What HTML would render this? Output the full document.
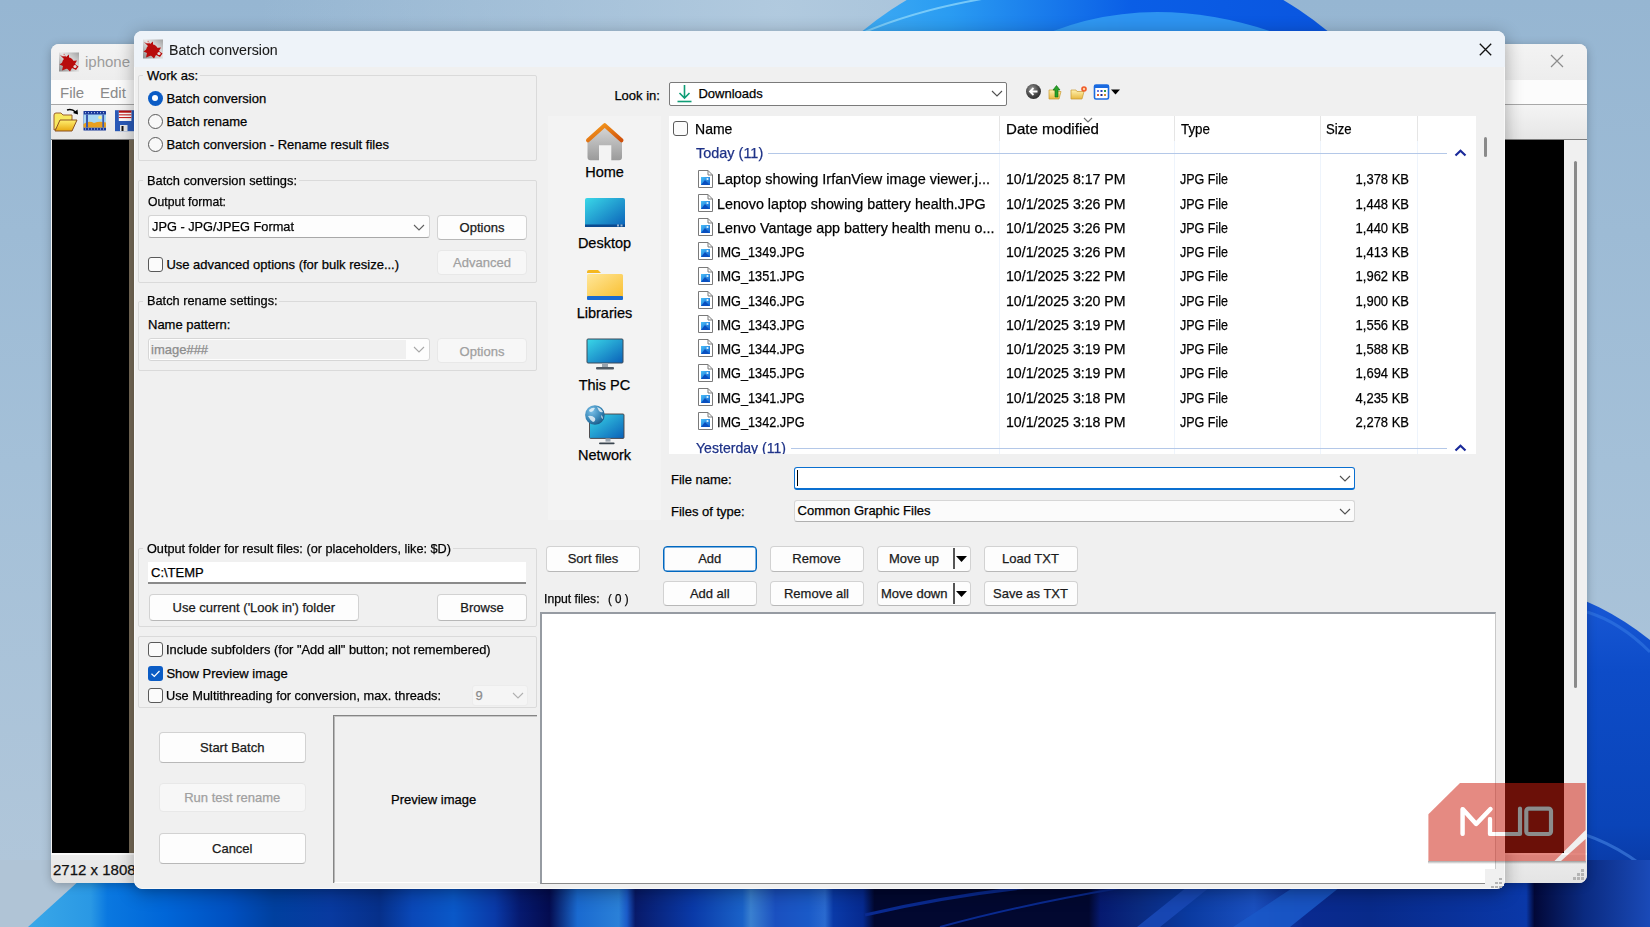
<!DOCTYPE html>
<html><head><meta charset="utf-8"><title>Batch conversion</title>
<style>
html,body{margin:0;padding:0;width:1650px;height:927px;overflow:hidden;background:#a3bfd7}
body{position:relative;font-family:"Liberation Sans",sans-serif;color:#000}
.a{position:absolute;box-sizing:border-box}
.t{position:absolute;white-space:nowrap;line-height:1;transform-origin:0 0;-webkit-text-stroke:0.25px currentColor}
</style></head><body>
<svg class="a" style="left:0;top:0" width="1650" height="927" viewBox="0 0 1650 927">
<defs>
<linearGradient id="wbg" x1="0" y1="0" x2="0" y2="1">
<stop offset="0" stop-color="#96b6d2"/><stop offset="0.5" stop-color="#a4c0d8"/><stop offset="1" stop-color="#b2c7da"/></linearGradient>
<linearGradient id="topb" x1="0" y1="0" x2="1" y2="0">
<stop offset="0" stop-color="#5cc0f4"/><stop offset="0.3" stop-color="#2a9cf2"/><stop offset="0.55" stop-color="#0a5ee6"/><stop offset="0.8" stop-color="#0a56e0"/><stop offset="1" stop-color="#2a78e8"/></linearGradient>
<linearGradient id="botb" x1="0" y1="0" x2="1" y2="0"><stop offset="0" stop-color="#b0c4d6"/><stop offset="0.016" stop-color="#b0c4d6"/><stop offset="0.017" stop-color="#3aa8e8"/><stop offset="0.055" stop-color="#2a98e4"/><stop offset="0.065" stop-color="#0a78e0"/><stop offset="0.1" stop-color="#0066d8"/><stop offset="0.14" stop-color="#0050c0"/><stop offset="0.166" stop-color="#00409f"/><stop offset="0.2" stop-color="#083aa0"/><stop offset="0.23" stop-color="#06308a"/><stop offset="0.25" stop-color="#0a48b8"/><stop offset="0.275" stop-color="#0a58c8"/><stop offset="0.3" stop-color="#0a3aa8"/><stop offset="0.315" stop-color="#061a70"/><stop offset="0.333" stop-color="#040c50"/><stop offset="0.35" stop-color="#1a6ad0"/><stop offset="0.375" stop-color="#2a80d8"/><stop offset="0.38" stop-color="#1a5ac8"/><stop offset="0.385" stop-color="#081a6a"/><stop offset="0.42" stop-color="#0a3aa8"/><stop offset="0.45" stop-color="#1a62c8"/><stop offset="0.455" stop-color="#3a80d0"/><stop offset="0.47" stop-color="#1a50c0"/><stop offset="0.49" stop-color="#1a5ac8"/><stop offset="0.5" stop-color="#2a6ad0"/><stop offset="0.505" stop-color="#0a3aa8"/><stop offset="0.523" stop-color="#062a90"/><stop offset="0.53" stop-color="#020830"/><stop offset="0.66" stop-color="#020830"/><stop offset="0.667" stop-color="#061a70"/><stop offset="0.69" stop-color="#0a2a80"/><stop offset="0.72" stop-color="#0a3aa0"/><stop offset="0.76" stop-color="#1a50c0"/><stop offset="0.79" stop-color="#0a2a90"/><stop offset="0.83" stop-color="#082a8a"/><stop offset="0.925" stop-color="#0a38a8"/><stop offset="0.93" stop-color="#020838"/><stop offset="0.96" stop-color="#0a2a80"/><stop offset="1" stop-color="#1a4ab8"/></linearGradient>
<linearGradient id="rb" x1="0" y1="0" x2="0" y2="1">
<stop offset="0" stop-color="#1a5ad8"/><stop offset="0.25" stop-color="#0d4cc8"/><stop offset="0.7" stop-color="#0a44b8"/><stop offset="1" stop-color="#082e90"/></linearGradient>
</defs>
<radialGradient id="lt" cx="780" cy="10" r="520" gradientUnits="userSpaceOnUse"><stop offset="0" stop-color="#b4cce0" stop-opacity="0.9"/><stop offset="1" stop-color="#b4cce0" stop-opacity="0"/></radialGradient>
<rect width="1650" height="927" fill="url(#wbg)"/>
<rect width="1650" height="927" fill="url(#lt)"/>
<circle cx="1095" cy="315" r="367" fill="url(#topb)"/>
<path d="M1020 46 Q1150 -22 1310 46 Z" fill="#3aa6f4" opacity="0.75"/>
<path d="M860 34 Q920 8 1000 -4" stroke="#8ad4fa" stroke-width="2" fill="none" opacity="0.8"/>
<path d="M1540 586 Q1600 600 1650 640 L1650 927 L1540 927 Z" fill="url(#rb)"/>
<path d="M1587 612 Q1620 622 1650 652" stroke="#3a80e8" stroke-width="3" fill="none" opacity="0.5"/>
<path d="M1540 850 Q1610 860 1650 900 L1650 927 L1540 927 Z" fill="#0a2a80"/>
<path d="M1560 828 Q1610 838 1650 872" stroke="#4a8ae8" stroke-width="3" fill="none" opacity="0.55"/>
<rect x="0" y="860" width="1650" height="67" fill="url(#botb)"/>
<path d="M0 860 L102 860 L28 927 L0 927 Z" fill="#b0c4d6"/>
<path d="M1137 927 L1160 927 L1215 883 L1192 883 Z" fill="#1a4ab8" opacity="0.85"/>
<path d="M1233 927 L1290 927 L1345 883 L1300 883 Z" fill="#1a58c8" opacity="0.9"/>
<path d="M865 915 Q950 895 1040 886" stroke="#0a2a90" stroke-width="3" fill="none"/>
<path d="M940 927 Q1020 905 1120 888" stroke="#0a2a90" stroke-width="2" fill="none"/>
</svg>
<div class="a" style="left:51px;top:44px;width:1536px;height:839px;background:#f0f0f0;border-radius:8px;box-shadow:0 2px 10px rgba(0,0,0,0.25);overflow:hidden"></div>
<div class="a" style="left:51px;top:44px;width:1536px;height:36px;background:linear-gradient(#f3f3f3,#ededed);border-radius:8px 8px 0 0"></div>
<div class="t" style="left:85px;top:53.60px;font-size:15px;color:#9c9c9c;-webkit-text-stroke:0">iphone</div>
<div class="a" style="left:51px;top:80px;width:1536px;height:24px;background:#fcfcfc"></div>
<div class="a" style="left:51px;top:104px;width:1536px;height:1px;background:#a8a8a8"></div>
<div class="t" style="left:60px;top:84.50px;font-size:15px;color:#8a8a8a;-webkit-text-stroke:0">File</div>
<div class="t" style="left:100px;top:84.50px;font-size:15px;color:#8a8a8a;-webkit-text-stroke:0">Edit</div>
<div class="a" style="left:51px;top:105px;width:1536px;height:34px;background:linear-gradient(#f4f4f4,#e6e6e6)"></div>
<div class="a" style="left:51px;top:139px;width:1536px;height:1px;background:#7e7e7e"></div>
<div class="a" style="left:52px;top:140px;width:1512px;height:713px;background:#000"></div>
<div class="a" style="left:129px;top:140px;width:5px;height:713px;background:#776b58"></div>
<div class="a" style="left:1564px;top:140px;width:23px;height:713px;background:#f0f0f0"></div>
<div class="a" style="left:1574px;top:161px;width:3px;height:527px;background:#8a8a8a;border-radius:2px"></div>
<div class="a" style="left:51px;top:853px;width:1536px;height:2px;background:#fafafa"></div>
<div class="a" style="left:51px;top:855px;width:1536px;height:28px;background:linear-gradient(#ececec,#e4e4e4);border-radius:0 0 8px 8px"></div>
<div class="t" style="left:53px;top:862.30px;font-size:15px;color:#111;">2712 x 1808</div>
<svg class="a" style="left:1550px;top:54px" width="14" height="14"><path d="M1 1L13 13M13 1L1 13" stroke="#8c8c8c" stroke-width="1.2"/></svg>
<svg class="a" style="left:59px;top:52px" width="20" height="20" viewBox="0 0 20 20">
<defs><linearGradient id="ig59" x1="1" y1="0" x2="0" y2="1"><stop offset="0" stop-color="#a0a0a0"/><stop offset="0.45" stop-color="#e6e6e6"/><stop offset="1" stop-color="#8a8a8a"/></linearGradient></defs>
<rect x="0" y="0.5" width="20" height="19" fill="url(#ig59)"/>
<circle cx="9" cy="11" r="5.8" fill="#b80c0c"/>
<path d="M1 3L4 4.5L5 1.5L7 5L10 2.5L10 6L6 8Z" fill="#b80c0c"/>
<path d="M13 9L18 8.5L16 12L19.5 14.5L17 18L13 16L11 19.5L8 16.5L3 18.5L4 14L0.5 12.5L4 10Z" fill="#b80c0c"/>
<circle cx="16" cy="14.5" r="1.6" fill="#e0e0e0"/>
<circle cx="5" cy="3.5" r="0.9" fill="#f0f0f0"/>
</svg>
<svg class="a" style="left:52px;top:108px" width="84" height="26" viewBox="0 0 84 26">
<defs><linearGradient id="tfy" x1="0" y1="0" x2="0" y2="1"><stop offset="0" stop-color="#fff070"/><stop offset="1" stop-color="#e8a810"/></linearGradient></defs>
<path d="M2 7Q2 5 4 5L9 5L11 7L20 7L20 12L2 22Z" fill="#f8e860" stroke="#9a6030" stroke-width="1"/>
<path d="M8 12L25 12L20 23L3 23Z" fill="url(#tfy)" stroke="#8a5020" stroke-width="1"/>
<path d="M15 2Q20 0.5 23.5 4" stroke="#000" stroke-width="1.6" fill="none"/><path d="M21 5L25.5 1.5L26 6.5Z" fill="#000"/>
<rect x="31.5" y="3" width="22.5" height="19.5" rx="0.5" fill="#1a3a9a"/>
<rect x="31.5" y="6.5" width="22.5" height="13" fill="#a8d8f4"/>
<path d="M31.5 16Q37 12 42 15Q47 13 54 14.5L54 19.5L31.5 19.5Z" fill="#e8a020"/>
<circle cx="48" cy="9.5" r="1.8" fill="#f8f090"/>
<rect x="34" y="6.5" width="2" height="13" fill="#3a5ab0"/><rect x="50.3" y="6.5" width="1.8" height="13" fill="#3a5ab0"/>
<g fill="#c8d8f8"><rect x="33" y="4.2" width="1" height="1"/><rect x="36" y="4.2" width="1" height="1"/><rect x="39" y="4.2" width="1" height="1"/><rect x="42" y="4.2" width="1" height="1"/><rect x="45" y="4.2" width="1" height="1"/><rect x="48" y="4.2" width="1" height="1"/><rect x="51" y="4.2" width="1" height="1"/>
<rect x="33" y="20.5" width="1" height="1"/><rect x="36" y="20.5" width="1" height="1"/><rect x="39" y="20.5" width="1" height="1"/><rect x="42" y="20.5" width="1" height="1"/><rect x="45" y="20.5" width="1" height="1"/><rect x="48" y="20.5" width="1" height="1"/><rect x="51" y="20.5" width="1" height="1"/></g>
<rect x="63" y="2.2" width="21" height="21" fill="#2a5ab8"/>
<rect x="66.8" y="2.5" width="12.6" height="10.5" fill="#fff"/>
<rect x="66.8" y="2.5" width="12.6" height="2.2" fill="#b81010"/><rect x="66.8" y="6.3" width="12.6" height="1.1" fill="#c82020"/><rect x="66.8" y="9" width="12.6" height="1.1" fill="#c82020"/>
<rect x="68" y="17" width="7.5" height="6" fill="#e8e8e8"/><rect x="69.5" y="18" width="2" height="5" fill="#111"/>
</svg>
<div class="a" style="left:134px;top:31px;width:1371px;height:858px;background:#f0f0f0;border-radius:8px;box-shadow:0 4px 18px rgba(0,0,0,0.32);border:1px solid #f8f8f8;overflow:hidden"></div>
<div class="a" style="left:134px;top:31px;width:1371px;height:36px;background:#eef3f9;border-radius:8px 8px 0 0"></div>
<svg class="a" style="left:143px;top:39px" width="20" height="20" viewBox="0 0 20 20">
<defs><linearGradient id="ig143" x1="1" y1="0" x2="0" y2="1"><stop offset="0" stop-color="#a0a0a0"/><stop offset="0.45" stop-color="#e6e6e6"/><stop offset="1" stop-color="#8a8a8a"/></linearGradient></defs>
<rect x="0" y="0.5" width="20" height="19" fill="url(#ig143)"/>
<circle cx="9" cy="11" r="5.8" fill="#b80c0c"/>
<path d="M1 3L4 4.5L5 1.5L7 5L10 2.5L10 6L6 8Z" fill="#b80c0c"/>
<path d="M13 9L18 8.5L16 12L19.5 14.5L17 18L13 16L11 19.5L8 16.5L3 18.5L4 14L0.5 12.5L4 10Z" fill="#b80c0c"/>
<circle cx="16" cy="14.5" r="1.6" fill="#e0e0e0"/>
<circle cx="5" cy="3.5" r="0.9" fill="#f0f0f0"/>
</svg>
<div class="t" style="left:168.5px;top:42.85px;font-size:14px;color:#1a1a1a;transform:scaleX(1.0122);-webkit-text-stroke:0.1px #1a1a1a">Batch conversion</div>
<svg class="a" style="left:1478.5px;top:42.5px" width="13" height="13"><path d="M0.8 0.8L12.2 12.2M12.2 0.8L0.8 12.2" stroke="#111" stroke-width="1.3"/></svg>
<div class="a" style="left:138px;top:75px;width:399px;height:86px;border:1px solid #dadada;border-radius:2px"></div><div class="a" style="left:143px;top:72px;width:57px;height:6px;background:#f0f0f0"></div>
<div class="t" style="left:147px;top:69.00px;font-size:13px;color:#000;">Work as:</div>
<div class="a" style="left:147.8px;top:90.9px;width:15.0px;height:15.0px;background:#0b5cc5;border-radius:50%"></div><div class="a" style="left:152.3px;top:95.4px;width:6.0px;height:6.0px;background:#fff;border-radius:50%"></div>
<div class="t" style="left:166.4px;top:92.00px;font-size:13px;color:#000;">Batch conversion</div>
<div class="a" style="left:147.8px;top:114.1px;width:15.0px;height:15.0px;background:#f8f8f8;border:1px solid #5a5a5a;border-radius:50%"></div>
<div class="t" style="left:166.4px;top:115.20px;font-size:13px;color:#000;">Batch rename</div>
<div class="a" style="left:147.8px;top:137.2px;width:15.0px;height:15.0px;background:#f8f8f8;border:1px solid #5a5a5a;border-radius:50%"></div>
<div class="t" style="left:166.4px;top:138.30px;font-size:13px;color:#000;">Batch conversion - Rename result files</div>
<div class="a" style="left:138px;top:180px;width:399px;height:103px;border:1px solid #dadada;border-radius:2px"></div><div class="a" style="left:143px;top:177px;width:156px;height:6px;background:#f0f0f0"></div>
<div class="t" style="left:147px;top:174.00px;font-size:13px;color:#000;transform:scaleX(0.9885);">Batch conversion settings:</div>
<div class="t" style="left:148px;top:195.00px;font-size:13px;color:#000;transform:scaleX(0.9387);">Output format:</div>
<div class="a" style="left:148px;top:215px;width:282px;height:23px;background:#fdfdfd;border:1px solid #d4d4d4;border-bottom-color:#a8a8a8;border-radius:3px"></div>
<div class="t" style="left:152px;top:220.40px;font-size:13px;color:#000;transform:scaleX(0.9829);">JPG - JPG/JPEG Format</div>
<svg class="a" style="left:413.0px;top:223.5px" width="12" height="7"><path d="M1 1L6.0 6L11 1" stroke="#606060" stroke-width="1.1" fill="none"/></svg>
<div class="a" style="left:437px;top:215px;width:90px;height:25px;background:#fdfdfd;border:1px solid #d2d2d2;border-bottom-color:#b8b8b8;border-radius:4px"></div><div class="t" style="left:437px;width:90px;text-align:center;top:221.40px;font-size:13px;color:#1a1a1a;">Options</div>
<div class="a" style="left:148px;top:256.5px;width:15px;height:15.0px;background:#fbfbfb;border:1px solid #5a5a5a;border-radius:3px"></div>
<div class="t" style="left:166.4px;top:258.00px;font-size:13px;color:#000;">Use advanced options (for bulk resize...)</div>
<div class="a" style="left:437px;top:250px;width:90px;height:25px;background:#f7f7f7;border:1px solid #e8e8e8;border-radius:4px"></div><div class="t" style="left:437px;width:90px;text-align:center;top:256.00px;font-size:13px;color:#a0a0a0;">Advanced</div>
<div class="a" style="left:138px;top:301px;width:399px;height:70px;border:1px solid #dadada;border-radius:2px"></div><div class="a" style="left:143px;top:298px;width:136px;height:6px;background:#f0f0f0"></div>
<div class="t" style="left:147px;top:294.40px;font-size:13px;color:#000;transform:scaleX(0.9823);">Batch rename settings:</div>
<div class="t" style="left:148px;top:317.60px;font-size:13px;color:#000;">Name pattern:</div>
<div class="a" style="left:148px;top:338px;width:282px;height:22.5px;background:#fdfdfd;border:1px solid #d6d6d6;border-radius:3px"></div>
<div class="a" style="left:150px;top:340px;width:256px;height:18.5px;background:#f0f0f0"></div>
<div class="t" style="left:151px;top:342.50px;font-size:13px;color:#8c8c8c;">image###</div>
<svg class="a" style="left:413.0px;top:345.5px" width="12" height="7"><path d="M1 1L6.0 6L11 1" stroke="#a8a8a8" stroke-width="1.1" fill="none"/></svg>
<div class="a" style="left:437px;top:337.5px;width:90px;height:25.5px;background:#f7f7f7;border:1px solid #e8e8e8;border-radius:4px"></div><div class="t" style="left:437px;width:90px;text-align:center;top:344.50px;font-size:13px;color:#a0a0a0;">Options</div>
<div class="a" style="left:138px;top:548px;width:399px;height:79px;border:1px solid #dadada;border-radius:2px"></div><div class="a" style="left:143px;top:545px;width:310px;height:6px;background:#f0f0f0"></div>
<div class="t" style="left:147px;top:542.00px;font-size:13px;color:#000;transform:scaleX(0.9762);">Output folder for result files: (or placeholders, like: $D)</div>
<div class="a" style="left:148px;top:562px;width:378px;height:22px;background:#fff;border-bottom:2px solid #8a8a8a"></div>
<div class="t" style="left:151px;top:566.00px;font-size:13px;color:#000;">C:\TEMP</div>
<div class="a" style="left:149px;top:593.5px;width:209.5px;height:27.0px;background:#fdfdfd;border:1px solid #d2d2d2;border-bottom-color:#b8b8b8;border-radius:4px"></div><div class="t" style="left:149px;width:209.5px;text-align:center;top:601.00px;font-size:13px;color:#1a1a1a;">Use current ('Look in') folder</div>
<div class="a" style="left:437px;top:593.5px;width:90px;height:27.0px;background:#fdfdfd;border:1px solid #d2d2d2;border-bottom-color:#b8b8b8;border-radius:4px"></div><div class="t" style="left:437px;width:90px;text-align:center;top:601.00px;font-size:13px;color:#1a1a1a;">Browse</div>
<div class="a" style="left:138px;top:635.5px;width:399px;height:72.0px;border:1px solid #dadada;border-radius:2px"></div>
<div class="a" style="left:148px;top:642.3px;width:15px;height:15.0px;background:#fbfbfb;border:1px solid #5a5a5a;border-radius:3px"></div>
<div class="t" style="left:166.4px;top:643.40px;font-size:13px;color:#000;transform:scaleX(0.9899);">Include subfolders (for &quot;Add all&quot; button; not remembered)</div>
<div class="a" style="left:148px;top:665.5px;width:15px;height:15.0px;background:#0b5cc5;border-radius:3px"></div><svg class="a" style="left:148px;top:665.5px" width="15" height="15"><path d="M3.5 7.8L6.3 10.5L11.5 5" stroke="#fff" stroke-width="1.2" fill="none"/></svg>
<div class="t" style="left:166.4px;top:666.60px;font-size:13px;color:#000;">Show Preview image</div>
<div class="a" style="left:148px;top:688px;width:15px;height:15px;background:#fbfbfb;border:1px solid #5a5a5a;border-radius:3px"></div>
<div class="t" style="left:166.4px;top:689.00px;font-size:13px;color:#000;transform:scaleX(0.9834);">Use Multithreading for conversion, max. threads:</div>
<div class="a" style="left:471.5px;top:684.5px;width:56.5px;height:21.5px;background:#f5f5f5;border:1px solid #ececec;border-radius:3px"></div>
<div class="t" style="left:475.5px;top:689.00px;font-size:13px;color:#8c8c8c;">9</div>
<svg class="a" style="left:512.0px;top:692.0px" width="12" height="7"><path d="M1 1L6.0 6L11 1" stroke="#b0b0b0" stroke-width="1.1" fill="none"/></svg>
<div class="a" style="left:159px;top:731.5px;width:146.5px;height:31.0px;background:#fdfdfd;border:1px solid #d2d2d2;border-bottom-color:#b8b8b8;border-radius:4px"></div><div class="t" style="left:159px;width:146.5px;text-align:center;top:741.00px;font-size:13px;color:#1a1a1a;">Start Batch</div>
<div class="a" style="left:159px;top:783px;width:146.5px;height:29px;background:#f7f7f7;border:1px solid #e8e8e8;border-radius:4px"></div><div class="t" style="left:159px;width:146.5px;text-align:center;top:791.00px;font-size:13px;color:#a0a0a0;">Run test rename</div>
<div class="a" style="left:159px;top:832.5px;width:146.5px;height:31.0px;background:#fdfdfd;border:1px solid #d2d2d2;border-bottom-color:#b8b8b8;border-radius:4px"></div><div class="t" style="left:159px;width:146.5px;text-align:center;top:842.00px;font-size:13px;color:#1a1a1a;">Cancel</div>
<div class="a" style="left:333px;top:714.5px;width:204px;height:168.5px;border-left:1px solid #858585;border-top:1px solid #858585"></div>
<div class="a" style="left:334px;top:715.5px;width:203px;height:167.5px;border-left:1px solid #b8b8b8;border-top:1px solid #c8c8c8;border-bottom:1px solid #fff"></div>
<div class="t" style="left:391px;top:793.00px;font-size:13px;color:#000;">Preview image</div>
<div class="t" style="left:614.4px;top:88.60px;font-size:13px;color:#000;">Look in:</div>
<div class="a" style="left:669px;top:81.5px;width:338px;height:24.0px;background:#fff;border:1px solid #7a7a7a;border-radius:2px"></div>
<svg class="a" style="left:677px;top:84px" width="15" height="19" viewBox="0 0 15 19"><path d="M7.5 1V14M2.5 9L7.5 14L12.5 9" stroke="#0f9d76" stroke-width="1.6" fill="none"/><path d="M0.5 17.5H14.5" stroke="#0f9d76" stroke-width="1.6"/></svg>
<div class="t" style="left:698.4px;top:87.00px;font-size:13px;color:#000;">Downloads</div>
<svg class="a" style="left:991.0px;top:90.0px" width="12" height="7"><path d="M1 1L6.0 6L11 1" stroke="#505050" stroke-width="1.1" fill="none"/></svg>
<svg class="a" style="left:1024px;top:82px" width="100" height="20" viewBox="0 0 100 20">
<defs><radialGradient id="bk" cx="0.4" cy="0.35" r="0.7"><stop offset="0" stop-color="#9a9a9a"/><stop offset="0.6" stop-color="#4a4a4a"/><stop offset="1" stop-color="#2a2a2a"/></radialGradient>
<linearGradient id="fy" x1="0" y1="0" x2="0" y2="1"><stop offset="0" stop-color="#fff2b0"/><stop offset="1" stop-color="#e8b840"/></linearGradient></defs>
<circle cx="9.5" cy="9.5" r="7.5" fill="url(#bk)"/><path d="M13.5 9.5H6.5M9.5 6L6 9.5L9.5 13" stroke="#fff" stroke-width="1.8" fill="none"/>
<path d="M25 8L30 8L31 9.5L37 9.5L35 17L25 17Z" fill="url(#fy)" stroke="#c89a30" stroke-width="0.7"/>
<path d="M31 15L31 8L29 8L32.5 3.5L36 8L34 8L34 15Z" fill="#2aa02a" stroke="#0a700a" stroke-width="0.6"/>
<path d="M47 8L52 8L53 9.5L60 9.5L58 17L47 17Z" fill="url(#fy)" stroke="#c89a30" stroke-width="0.7"/>
<circle cx="60" cy="7" r="2.8" fill="#f05a28"/><circle cx="60" cy="7" r="1.2" fill="#ffd0a0"/>
<rect x="70.5" y="3" width="14" height="14" rx="1.5" fill="#fff" stroke="#1a6ae0" stroke-width="1.6"/><rect x="70" y="3" width="15" height="3" fill="#1a6ae0"/>
<rect x="73" y="8" width="2" height="2" fill="#6a7ae0"/><rect x="76.5" y="8" width="2" height="2" fill="#2a4ac0"/><rect x="80" y="8" width="2" height="2" fill="#2a9a4a"/>
<rect x="73" y="12" width="2" height="2" fill="#e06030"/><rect x="76.5" y="12" width="2" height="2" fill="#1a2a8a"/><rect x="80" y="12" width="2" height="2" fill="#d09030"/>
<path d="M87 7.5H96L91.5 12.5Z" fill="#000"/>
</svg>
<div class="a" style="left:548px;top:116px;width:113px;height:404px;background:#f3f3f3"></div>
<svg class="a" style="left:584px;top:120px" width="42" height="42" viewBox="0 0 42 42">
<defs><linearGradient id="hg" x1="0" y1="0" x2="0" y2="1"><stop offset="0" stop-color="#d8d8d8"/><stop offset="1" stop-color="#9a9a9a"/></linearGradient>
<linearGradient id="ho" x1="0" y1="0" x2="1" y2="1"><stop offset="0" stop-color="#f7a020"/><stop offset="1" stop-color="#d0500a"/></linearGradient></defs>
<path d="M3.5 21L20.7 5.5L38 21V37.3Q38 40.3 35 40.3H27.3V25.3H15V40.3H6.5Q3.5 40.3 3.5 37.3Z" fill="url(#hg)"/>
<path d="M4 20.3L20.7 5.2L37.5 20.3" stroke="url(#ho)" stroke-width="4" stroke-linecap="round" stroke-linejoin="round" fill="none"/>
</svg>
<div class="t" style="left:569px;width:71px;text-align:center;top:164.73px;font-size:14.5px;color:#000;">Home</div>
<svg class="a" style="left:584px;top:197px" width="42" height="32" viewBox="0 0 42 32">
<defs><linearGradient id="dg" x1="0" y1="0" x2="1" y2="1"><stop offset="0" stop-color="#3ad8e8"/><stop offset="1" stop-color="#0a60b8"/></linearGradient></defs>
<rect x="1" y="1" width="40" height="29" rx="2" fill="url(#dg)"/><rect x="1" y="27.5" width="40" height="2.5" fill="#0a4a90"/>
<rect x="33" y="27.5" width="2" height="2" fill="#fff" opacity="0.6"/><rect x="36.5" y="27.5" width="2" height="2" fill="#fff" opacity="0.6"/>
</svg>
<div class="t" style="left:569px;width:71px;text-align:center;top:235.73px;font-size:14.5px;color:#000;">Desktop</div>
<svg class="a" style="left:586px;top:268px" width="38" height="34" viewBox="0 0 38 34">
<defs><linearGradient id="fg" x1="0" y1="0" x2="1" y2="1"><stop offset="0" stop-color="#ffe79a"/><stop offset="1" stop-color="#f9bf30"/></linearGradient></defs>
<path d="M1 4Q1 2 3 2L12 2L15 5L1 5Z" fill="#f4b820"/>
<rect x="1" y="6" width="36" height="24" rx="1.5" fill="url(#fg)"/><rect x="1" y="28" width="36" height="4" rx="1" fill="#1a6ad0"/>
</svg>
<div class="t" style="left:569px;width:71px;text-align:center;top:305.73px;font-size:14.5px;color:#000;">Libraries</div>
<svg class="a" style="left:586px;top:338px" width="38" height="34" viewBox="0 0 38 34">
<defs><linearGradient id="pg" x1="0" y1="0" x2="1" y2="1"><stop offset="0" stop-color="#3ad8e8"/><stop offset="1" stop-color="#0a60b8"/></linearGradient></defs>
<rect x="1" y="1" width="36" height="24" rx="1" fill="url(#pg)" stroke="#3a4a5a" stroke-width="1"/>
<rect x="16" y="25" width="6" height="4" fill="#9aa4ae"/><rect x="10" y="29" width="18" height="2.5" rx="1" fill="#505a64"/>
</svg>
<div class="t" style="left:569px;width:71px;text-align:center;top:377.73px;font-size:14.5px;color:#000;">This PC</div>
<svg class="a" style="left:584px;top:404px" width="42" height="42" viewBox="0 0 42 42">
<defs><linearGradient id="ng" x1="0" y1="0" x2="1" y2="1"><stop offset="0" stop-color="#3ad8e8"/><stop offset="1" stop-color="#0a60b8"/></linearGradient>
<radialGradient id="gl" cx="0.35" cy="0.3" r="0.75"><stop offset="0" stop-color="#7ac0e8"/><stop offset="0.6" stop-color="#3a88b8"/><stop offset="1" stop-color="#1a5a88"/></radialGradient></defs>
<rect x="5.5" y="10" width="34.5" height="24.4" rx="1" fill="url(#ng)" stroke="#4a4040" stroke-width="0.9"/>
<rect x="21.5" y="34.4" width="5" height="3.2" fill="#9aa4ae"/><rect x="15" y="38.4" width="15.6" height="1.8" rx="0.9" fill="#3a444e"/>
<circle cx="10.9" cy="11" r="9.8" fill="url(#gl)"/>
<path d="M5 6Q8 3 11 4Q10 7 7 8Q5 8 5 6Z M13 3Q17 4 19 8Q17 9 15 7Z M4 12Q8 11 11 14Q12 17 9 18Q6 16 4 12Z M17 11Q19 12 19 15Q17 14 17 11Z" fill="#e8f2f8" opacity="0.85"/>
</svg>
<div class="t" style="left:569px;width:71px;text-align:center;top:448.13px;font-size:14.5px;color:#000;">Network</div>
<div class="a" style="left:669px;top:116px;width:807px;height:338px;background:#fff;overflow:hidden"></div>
<div class="a" style="left:999px;top:116px;width:1px;height:25px;background:#e5e5e5"></div>
<div class="a" style="left:999px;top:141px;width:1px;height:313px;background:#eef4fc"></div>
<div class="a" style="left:1174px;top:116px;width:1px;height:25px;background:#e5e5e5"></div>
<div class="a" style="left:1174px;top:141px;width:1px;height:313px;background:#eef4fc"></div>
<div class="a" style="left:1319.6px;top:116px;width:1.0px;height:25px;background:#e5e5e5"></div>
<div class="a" style="left:1319.6px;top:141px;width:1.0px;height:313px;background:#eef4fc"></div>
<div class="a" style="left:1417px;top:116px;width:1px;height:25px;background:#e5e5e5"></div>
<div class="a" style="left:1417px;top:141px;width:1px;height:313px;background:#eef4fc"></div>
<div class="a" style="left:673px;top:121px;width:15px;height:15px;background:#fbfbfb;border:1px solid #5a5a5a;border-radius:3px"></div>
<div class="t" style="left:695px;top:121.30px;font-size:15px;color:#000;transform:scaleX(0.9347);">Name</div>
<div class="t" style="left:1006px;top:121.30px;font-size:15px;color:#000;transform:scaleX(1.0049);">Date modified</div>
<svg class="a" style="left:1082.6px;top:116.5px" width="10" height="6"><path d="M1 1L5.0 5L9 1" stroke="#707070" stroke-width="1.1" fill="none"/></svg>
<div class="t" style="left:1181px;top:121.30px;font-size:15px;color:#000;transform:scaleX(0.8918);">Type</div>
<div class="t" style="left:1326.4px;top:121.30px;font-size:15px;color:#000;transform:scaleX(0.8773);">Size</div>
<div class="t" style="left:696.4px;top:145.30px;font-size:15px;color:#1e3287;transform:scaleX(0.9634);">Today (11)</div><div class="a" style="left:768px;top:153px;width:679px;height:1px;background:#b4c8e8"></div><svg class="a" style="left:1454px;top:149px" width="13" height="8"><path d="M1.5 6.5L6.5 1.8L11.5 6.5" stroke="#1a2a9a" stroke-width="2.2" fill="none"/></svg>
<svg width="0" height="0" style="position:absolute"><defs><linearGradient id="fi" x1="0" y1="0" x2="1" y2="1"><stop offset="0" stop-color="#4ac0f8"/><stop offset="1" stop-color="#1060d0"/></linearGradient></defs></svg>
<svg class="a" style="left:696.5px;top:168.5px" width="17" height="20" viewBox="0 0 17 20"><path d="M1.5 1.5H11L15.5 6V18.5H1.5Z" fill="#fff" stroke="#7a7a7a" stroke-width="1"/><path d="M11 1.5V6H15.5" fill="none" stroke="#7a7a7a" stroke-width="1"/><rect x="4" y="8" width="9" height="8" fill="url(#fi)"/><path d="M4 16L8 11L13 16Z" fill="#0a50c0"/><circle cx="10.5" cy="10" r="1.1" fill="#e0f4ff"/></svg>
<div class="t" style="left:717px;top:171.30px;font-size:15px;color:#000;transform:scaleX(0.9639);">Laptop showing IrfanView image viewer.j...</div>
<div class="t" style="left:1006px;top:171.30px;font-size:15px;color:#000;transform:scaleX(0.9435);">10/1/2025 8:17 PM</div>
<div class="t" style="left:1180.4px;top:171.30px;font-size:15px;color:#000;transform:scaleX(0.8346);">JPG File</div>
<div class="t" style="left:1009px;width:400px;text-align:right;top:171.30px;font-size:15px;color:#000;transform-origin:100% 0;transform:scaleX(0.8653);">1,378 KB</div>
<svg class="a" style="left:696.5px;top:192.75px" width="17" height="20" viewBox="0 0 17 20"><path d="M1.5 1.5H11L15.5 6V18.5H1.5Z" fill="#fff" stroke="#7a7a7a" stroke-width="1"/><path d="M11 1.5V6H15.5" fill="none" stroke="#7a7a7a" stroke-width="1"/><rect x="4" y="8" width="9" height="8" fill="url(#fi)"/><path d="M4 16L8 11L13 16Z" fill="#0a50c0"/><circle cx="10.5" cy="10" r="1.1" fill="#e0f4ff"/></svg>
<div class="t" style="left:717px;top:195.55px;font-size:15px;color:#000;transform:scaleX(0.9530);">Lenovo laptop showing battery health.JPG</div>
<div class="t" style="left:1006px;top:195.55px;font-size:15px;color:#000;transform:scaleX(0.9435);">10/1/2025 3:26 PM</div>
<div class="t" style="left:1180.4px;top:195.55px;font-size:15px;color:#000;transform:scaleX(0.8346);">JPG File</div>
<div class="t" style="left:1009px;width:400px;text-align:right;top:195.55px;font-size:15px;color:#000;transform-origin:100% 0;transform:scaleX(0.8653);">1,448 KB</div>
<svg class="a" style="left:696.5px;top:217.0px" width="17" height="20" viewBox="0 0 17 20"><path d="M1.5 1.5H11L15.5 6V18.5H1.5Z" fill="#fff" stroke="#7a7a7a" stroke-width="1"/><path d="M11 1.5V6H15.5" fill="none" stroke="#7a7a7a" stroke-width="1"/><rect x="4" y="8" width="9" height="8" fill="url(#fi)"/><path d="M4 16L8 11L13 16Z" fill="#0a50c0"/><circle cx="10.5" cy="10" r="1.1" fill="#e0f4ff"/></svg>
<div class="t" style="left:717px;top:219.80px;font-size:15px;color:#000;transform:scaleX(0.9540);">Lenvo Vantage app battery health menu o...</div>
<div class="t" style="left:1006px;top:219.80px;font-size:15px;color:#000;transform:scaleX(0.9435);">10/1/2025 3:26 PM</div>
<div class="t" style="left:1180.4px;top:219.80px;font-size:15px;color:#000;transform:scaleX(0.8346);">JPG File</div>
<div class="t" style="left:1009px;width:400px;text-align:right;top:219.80px;font-size:15px;color:#000;transform-origin:100% 0;transform:scaleX(0.8653);">1,440 KB</div>
<svg class="a" style="left:696.5px;top:241.25px" width="17" height="20" viewBox="0 0 17 20"><path d="M1.5 1.5H11L15.5 6V18.5H1.5Z" fill="#fff" stroke="#7a7a7a" stroke-width="1"/><path d="M11 1.5V6H15.5" fill="none" stroke="#7a7a7a" stroke-width="1"/><rect x="4" y="8" width="9" height="8" fill="url(#fi)"/><path d="M4 16L8 11L13 16Z" fill="#0a50c0"/><circle cx="10.5" cy="10" r="1.1" fill="#e0f4ff"/></svg>
<div class="t" style="left:717px;top:244.05px;font-size:15px;color:#000;transform:scaleX(0.8464);">IMG_1349.JPG</div>
<div class="t" style="left:1006px;top:244.05px;font-size:15px;color:#000;transform:scaleX(0.9435);">10/1/2025 3:26 PM</div>
<div class="t" style="left:1180.4px;top:244.05px;font-size:15px;color:#000;transform:scaleX(0.8346);">JPG File</div>
<div class="t" style="left:1009px;width:400px;text-align:right;top:244.05px;font-size:15px;color:#000;transform-origin:100% 0;transform:scaleX(0.8653);">1,413 KB</div>
<svg class="a" style="left:696.5px;top:265.5px" width="17" height="20" viewBox="0 0 17 20"><path d="M1.5 1.5H11L15.5 6V18.5H1.5Z" fill="#fff" stroke="#7a7a7a" stroke-width="1"/><path d="M11 1.5V6H15.5" fill="none" stroke="#7a7a7a" stroke-width="1"/><rect x="4" y="8" width="9" height="8" fill="url(#fi)"/><path d="M4 16L8 11L13 16Z" fill="#0a50c0"/><circle cx="10.5" cy="10" r="1.1" fill="#e0f4ff"/></svg>
<div class="t" style="left:717px;top:268.30px;font-size:15px;color:#000;transform:scaleX(0.8464);">IMG_1351.JPG</div>
<div class="t" style="left:1006px;top:268.30px;font-size:15px;color:#000;transform:scaleX(0.9435);">10/1/2025 3:22 PM</div>
<div class="t" style="left:1180.4px;top:268.30px;font-size:15px;color:#000;transform:scaleX(0.8346);">JPG File</div>
<div class="t" style="left:1009px;width:400px;text-align:right;top:268.30px;font-size:15px;color:#000;transform-origin:100% 0;transform:scaleX(0.8653);">1,962 KB</div>
<svg class="a" style="left:696.5px;top:289.75px" width="17" height="20" viewBox="0 0 17 20"><path d="M1.5 1.5H11L15.5 6V18.5H1.5Z" fill="#fff" stroke="#7a7a7a" stroke-width="1"/><path d="M11 1.5V6H15.5" fill="none" stroke="#7a7a7a" stroke-width="1"/><rect x="4" y="8" width="9" height="8" fill="url(#fi)"/><path d="M4 16L8 11L13 16Z" fill="#0a50c0"/><circle cx="10.5" cy="10" r="1.1" fill="#e0f4ff"/></svg>
<div class="t" style="left:717px;top:292.55px;font-size:15px;color:#000;transform:scaleX(0.8464);">IMG_1346.JPG</div>
<div class="t" style="left:1006px;top:292.55px;font-size:15px;color:#000;transform:scaleX(0.9435);">10/1/2025 3:20 PM</div>
<div class="t" style="left:1180.4px;top:292.55px;font-size:15px;color:#000;transform:scaleX(0.8346);">JPG File</div>
<div class="t" style="left:1009px;width:400px;text-align:right;top:292.55px;font-size:15px;color:#000;transform-origin:100% 0;transform:scaleX(0.8653);">1,900 KB</div>
<svg class="a" style="left:696.5px;top:314.0px" width="17" height="20" viewBox="0 0 17 20"><path d="M1.5 1.5H11L15.5 6V18.5H1.5Z" fill="#fff" stroke="#7a7a7a" stroke-width="1"/><path d="M11 1.5V6H15.5" fill="none" stroke="#7a7a7a" stroke-width="1"/><rect x="4" y="8" width="9" height="8" fill="url(#fi)"/><path d="M4 16L8 11L13 16Z" fill="#0a50c0"/><circle cx="10.5" cy="10" r="1.1" fill="#e0f4ff"/></svg>
<div class="t" style="left:717px;top:316.80px;font-size:15px;color:#000;transform:scaleX(0.8464);">IMG_1343.JPG</div>
<div class="t" style="left:1006px;top:316.80px;font-size:15px;color:#000;transform:scaleX(0.9435);">10/1/2025 3:19 PM</div>
<div class="t" style="left:1180.4px;top:316.80px;font-size:15px;color:#000;transform:scaleX(0.8346);">JPG File</div>
<div class="t" style="left:1009px;width:400px;text-align:right;top:316.80px;font-size:15px;color:#000;transform-origin:100% 0;transform:scaleX(0.8653);">1,556 KB</div>
<svg class="a" style="left:696.5px;top:338.25px" width="17" height="20" viewBox="0 0 17 20"><path d="M1.5 1.5H11L15.5 6V18.5H1.5Z" fill="#fff" stroke="#7a7a7a" stroke-width="1"/><path d="M11 1.5V6H15.5" fill="none" stroke="#7a7a7a" stroke-width="1"/><rect x="4" y="8" width="9" height="8" fill="url(#fi)"/><path d="M4 16L8 11L13 16Z" fill="#0a50c0"/><circle cx="10.5" cy="10" r="1.1" fill="#e0f4ff"/></svg>
<div class="t" style="left:717px;top:341.05px;font-size:15px;color:#000;transform:scaleX(0.8464);">IMG_1344.JPG</div>
<div class="t" style="left:1006px;top:341.05px;font-size:15px;color:#000;transform:scaleX(0.9435);">10/1/2025 3:19 PM</div>
<div class="t" style="left:1180.4px;top:341.05px;font-size:15px;color:#000;transform:scaleX(0.8346);">JPG File</div>
<div class="t" style="left:1009px;width:400px;text-align:right;top:341.05px;font-size:15px;color:#000;transform-origin:100% 0;transform:scaleX(0.8653);">1,588 KB</div>
<svg class="a" style="left:696.5px;top:362.5px" width="17" height="20" viewBox="0 0 17 20"><path d="M1.5 1.5H11L15.5 6V18.5H1.5Z" fill="#fff" stroke="#7a7a7a" stroke-width="1"/><path d="M11 1.5V6H15.5" fill="none" stroke="#7a7a7a" stroke-width="1"/><rect x="4" y="8" width="9" height="8" fill="url(#fi)"/><path d="M4 16L8 11L13 16Z" fill="#0a50c0"/><circle cx="10.5" cy="10" r="1.1" fill="#e0f4ff"/></svg>
<div class="t" style="left:717px;top:365.30px;font-size:15px;color:#000;transform:scaleX(0.8464);">IMG_1345.JPG</div>
<div class="t" style="left:1006px;top:365.30px;font-size:15px;color:#000;transform:scaleX(0.9435);">10/1/2025 3:19 PM</div>
<div class="t" style="left:1180.4px;top:365.30px;font-size:15px;color:#000;transform:scaleX(0.8346);">JPG File</div>
<div class="t" style="left:1009px;width:400px;text-align:right;top:365.30px;font-size:15px;color:#000;transform-origin:100% 0;transform:scaleX(0.8653);">1,694 KB</div>
<svg class="a" style="left:696.5px;top:386.75px" width="17" height="20" viewBox="0 0 17 20"><path d="M1.5 1.5H11L15.5 6V18.5H1.5Z" fill="#fff" stroke="#7a7a7a" stroke-width="1"/><path d="M11 1.5V6H15.5" fill="none" stroke="#7a7a7a" stroke-width="1"/><rect x="4" y="8" width="9" height="8" fill="url(#fi)"/><path d="M4 16L8 11L13 16Z" fill="#0a50c0"/><circle cx="10.5" cy="10" r="1.1" fill="#e0f4ff"/></svg>
<div class="t" style="left:717px;top:389.55px;font-size:15px;color:#000;transform:scaleX(0.8464);">IMG_1341.JPG</div>
<div class="t" style="left:1006px;top:389.55px;font-size:15px;color:#000;transform:scaleX(0.9435);">10/1/2025 3:18 PM</div>
<div class="t" style="left:1180.4px;top:389.55px;font-size:15px;color:#000;transform:scaleX(0.8346);">JPG File</div>
<div class="t" style="left:1009px;width:400px;text-align:right;top:389.55px;font-size:15px;color:#000;transform-origin:100% 0;transform:scaleX(0.8653);">4,235 KB</div>
<svg class="a" style="left:696.5px;top:411.0px" width="17" height="20" viewBox="0 0 17 20"><path d="M1.5 1.5H11L15.5 6V18.5H1.5Z" fill="#fff" stroke="#7a7a7a" stroke-width="1"/><path d="M11 1.5V6H15.5" fill="none" stroke="#7a7a7a" stroke-width="1"/><rect x="4" y="8" width="9" height="8" fill="url(#fi)"/><path d="M4 16L8 11L13 16Z" fill="#0a50c0"/><circle cx="10.5" cy="10" r="1.1" fill="#e0f4ff"/></svg>
<div class="t" style="left:717px;top:413.80px;font-size:15px;color:#000;transform:scaleX(0.8464);">IMG_1342.JPG</div>
<div class="t" style="left:1006px;top:413.80px;font-size:15px;color:#000;transform:scaleX(0.9435);">10/1/2025 3:18 PM</div>
<div class="t" style="left:1180.4px;top:413.80px;font-size:15px;color:#000;transform:scaleX(0.8346);">JPG File</div>
<div class="t" style="left:1009px;width:400px;text-align:right;top:413.80px;font-size:15px;color:#000;transform-origin:100% 0;transform:scaleX(0.8653);">2,278 KB</div>
<div class="t" style="left:696.4px;top:440.30px;font-size:15px;color:#1e3287;transform:scaleX(0.9386);">Yesterday (11)</div><div class="a" style="left:791px;top:448px;width:656px;height:1px;background:#b4c8e8"></div><svg class="a" style="left:1454px;top:444px" width="13" height="8"><path d="M1.5 6.5L6.5 1.8L11.5 6.5" stroke="#1a2a9a" stroke-width="2.2" fill="none"/></svg>
<div class="a" style="left:669px;top:454px;width:807px;height:16px;background:#f0f0f0"></div>
<div class="a" style="left:1484px;top:137px;width:3px;height:19.5px;background:#8a8a8a;border-radius:1.5px"></div>
<div class="t" style="left:671px;top:473.00px;font-size:13px;color:#000;">File name:</div>
<div class="a" style="left:793.5px;top:466.5px;width:561.5px;height:23.0px;background:#fff;border:1px solid #0a6fd0;border-bottom:2px solid #0a6fd0;border-radius:3px"></div>
<div class="a" style="left:797px;top:470px;width:1px;height:16px;background:#000"></div>
<svg class="a" style="left:1339.0px;top:474.5px" width="12" height="7"><path d="M1 1L6.0 6L11 1" stroke="#505050" stroke-width="1.1" fill="none"/></svg>
<div class="t" style="left:671px;top:504.60px;font-size:13px;color:#000;">Files of type:</div>
<div class="a" style="left:793.5px;top:499.5px;width:561.5px;height:22.0px;background:#fbfbfb;border:1px solid #d6d6d6;border-bottom-color:#b0b0b0;border-radius:3px"></div>
<div class="t" style="left:797.6px;top:504.00px;font-size:13px;color:#000;">Common Graphic Files</div>
<svg class="a" style="left:1339.0px;top:507.5px" width="12" height="7"><path d="M1 1L6.0 6L11 1" stroke="#505050" stroke-width="1.1" fill="none"/></svg>
<div class="a" style="left:546px;top:545.5px;width:94px;height:26.0px;background:#fdfdfd;border:1px solid #d2d2d2;border-bottom-color:#b8b8b8;border-radius:4px"></div><div class="t" style="left:546px;width:94px;text-align:center;top:552.00px;font-size:13px;color:#1a1a1a;">Sort files</div>
<div class="a" style="left:662.5px;top:545.5px;width:94.5px;height:26.0px;background:#fdfdfd;border:1px solid #0067c0;box-shadow:inset 0 0 0 0.5px #0067c0;border-radius:4px"></div><div class="t" style="left:662.5px;width:94.5px;text-align:center;top:552.00px;font-size:13px;color:#1a1a1a;">Add</div>
<div class="a" style="left:769.5px;top:545.5px;width:94.0px;height:26.0px;background:#fdfdfd;border:1px solid #d2d2d2;border-bottom-color:#b8b8b8;border-radius:4px"></div><div class="t" style="left:769.5px;width:94.0px;text-align:center;top:552.00px;font-size:13px;color:#1a1a1a;">Remove</div>
<div class="a" style="left:876.5px;top:545.5px;width:94.5px;height:26.0px;background:#fdfdfd;border:1px solid #d2d2d2;border-bottom-color:#b8b8b8;border-radius:4px"></div><div class="t" style="left:876.5px;width:94.5px;text-align:center;top:552.00px;font-size:13px;color:#1a1a1a;"></div>
<div class="t" style="left:889px;top:552.00px;font-size:13px;color:#1a1a1a;">Move up</div>
<div class="a" style="left:953px;top:548px;width:2px;height:21px;background:#555"></div>
<svg class="a" style="left:955px;top:555px" width="14" height="8"><path d="M1 1H12L6.5 7Z" fill="#000"/></svg>
<div class="a" style="left:983.5px;top:545.5px;width:94.0px;height:26.0px;background:#fdfdfd;border:1px solid #d2d2d2;border-bottom-color:#b8b8b8;border-radius:4px"></div><div class="t" style="left:983.5px;width:94.0px;text-align:center;top:552.00px;font-size:13px;color:#1a1a1a;">Load TXT</div>
<div class="t" style="left:544.4px;top:592.00px;font-size:13px;color:#000;transform:scaleX(0.9383);">Input files:</div>
<div class="t" style="left:608.4px;top:592.00px;font-size:13px;color:#000;transform:scaleX(0.8913);white-space:pre;">( 0 )</div>
<div class="a" style="left:662.5px;top:580.5px;width:94.5px;height:25.5px;background:#fdfdfd;border:1px solid #d2d2d2;border-bottom-color:#b8b8b8;border-radius:4px"></div><div class="t" style="left:662.5px;width:94.5px;text-align:center;top:587.00px;font-size:13px;color:#1a1a1a;">Add all</div>
<div class="a" style="left:769.5px;top:580.5px;width:94.0px;height:25.5px;background:#fdfdfd;border:1px solid #d2d2d2;border-bottom-color:#b8b8b8;border-radius:4px"></div><div class="t" style="left:769.5px;width:94.0px;text-align:center;top:587.00px;font-size:13px;color:#1a1a1a;">Remove all</div>
<div class="a" style="left:876.5px;top:580.5px;width:94.5px;height:25.5px;background:#fdfdfd;border:1px solid #d2d2d2;border-bottom-color:#b8b8b8;border-radius:4px"></div><div class="t" style="left:876.5px;width:94.5px;text-align:center;top:587.00px;font-size:13px;color:#1a1a1a;"></div>
<div class="t" style="left:881px;top:587.00px;font-size:13px;color:#1a1a1a;">Move down</div>
<div class="a" style="left:953px;top:583px;width:2px;height:21px;background:#555"></div>
<svg class="a" style="left:955px;top:590px" width="14" height="8"><path d="M1 1H12L6.5 7Z" fill="#000"/></svg>
<div class="a" style="left:983.5px;top:580.5px;width:94.0px;height:25.5px;background:#fdfdfd;border:1px solid #d2d2d2;border-bottom-color:#b8b8b8;border-radius:4px"></div><div class="t" style="left:983.5px;width:94.0px;text-align:center;top:587.00px;font-size:13px;color:#1a1a1a;">Save as TXT</div>
<div class="a" style="left:540px;top:612px;width:956px;height:272px;background:#fff;border-left:2px solid #969ba2;border-top:2px solid #969ba2;border-right:1px solid #c8c8c8;border-bottom:1px solid #8a8a8a"></div>
<div class="a" style="left:1485px;top:868.5px;width:19px;height:17.5px;background:#f0f0f0"></div>
<div class="a" style="left:1499.3px;top:877.5px;width:2.599999999999909px;height:2.6000000000000227px;background:#b4b4b4"></div><div class="a" style="left:1495.3px;top:881.5px;width:2.599999999999909px;height:2.6000000000000227px;background:#b4b4b4"></div><div class="a" style="left:1499.3px;top:881.5px;width:2.599999999999909px;height:2.6000000000000227px;background:#b4b4b4"></div><div class="a" style="left:1491.3px;top:885.5px;width:2.599999999999909px;height:2.6000000000000227px;background:#b4b4b4"></div><div class="a" style="left:1495.3px;top:885.5px;width:2.599999999999909px;height:2.6000000000000227px;background:#b4b4b4"></div><div class="a" style="left:1499.3px;top:885.5px;width:2.599999999999909px;height:2.6000000000000227px;background:#b4b4b4"></div>
<div class="a" style="left:1428px;top:861px;width:158px;height:3px;background:linear-gradient(rgba(60,60,60,0.45),rgba(60,60,60,0))"></div>
<div class="a" style="left:1581px;top:869px;width:2.599999999999909px;height:2.6000000000000227px;background:#b4b4b4"></div><div class="a" style="left:1577px;top:873px;width:2.599999999999909px;height:2.6000000000000227px;background:#b4b4b4"></div><div class="a" style="left:1581px;top:873px;width:2.599999999999909px;height:2.6000000000000227px;background:#b4b4b4"></div><div class="a" style="left:1573px;top:877px;width:2.599999999999909px;height:2.6000000000000227px;background:#b4b4b4"></div><div class="a" style="left:1577px;top:877px;width:2.599999999999909px;height:2.6000000000000227px;background:#b4b4b4"></div><div class="a" style="left:1581px;top:877px;width:2.599999999999909px;height:2.6000000000000227px;background:#b4b4b4"></div>
<svg class="a" style="left:1415px;top:775px" width="180" height="95" viewBox="1415 775 180 95">
<defs><mask id="mm"><rect x="1415" y="775" width="180" height="95" fill="#fff"/>
<g stroke="#000" stroke-width="4.2" fill="none" stroke-linecap="round" stroke-linejoin="round"><path d="M1462.6 834V809L1476.2 824L1490.5 809"/><path d="M1490 819V834H1520V808.5"/><rect x="1526.3" y="808.6" width="24.7" height="25.4" rx="2.5"/></g></mask>
<filter id="sh" x="-10%" y="-10%" width="120%" height="130%"><feDropShadow dx="-0.5" dy="1.5" stdDeviation="1" flood-color="#000" flood-opacity="0.3"/></filter></defs>
<g>
<path d="M1460 783H1585.6V830L1554.5 861H1428.4V814.3Z" fill="rgba(206,30,16,0.52)" mask="url(#mm)"/>
<path d="M1585.6 839V861H1561Z" fill="rgba(206,30,16,0.52)"/>
</g>
<g stroke="rgba(255,255,255,0.55)" stroke-width="4.2" fill="none" stroke-linecap="round" stroke-linejoin="round"><path d="M1462.6 834V809L1476.2 824L1490.5 809"/><path d="M1490 819V834H1520V808.5"/><rect x="1526.3" y="808.6" width="24.7" height="25.4" rx="2.5"/></g>
</svg>
</body></html>
